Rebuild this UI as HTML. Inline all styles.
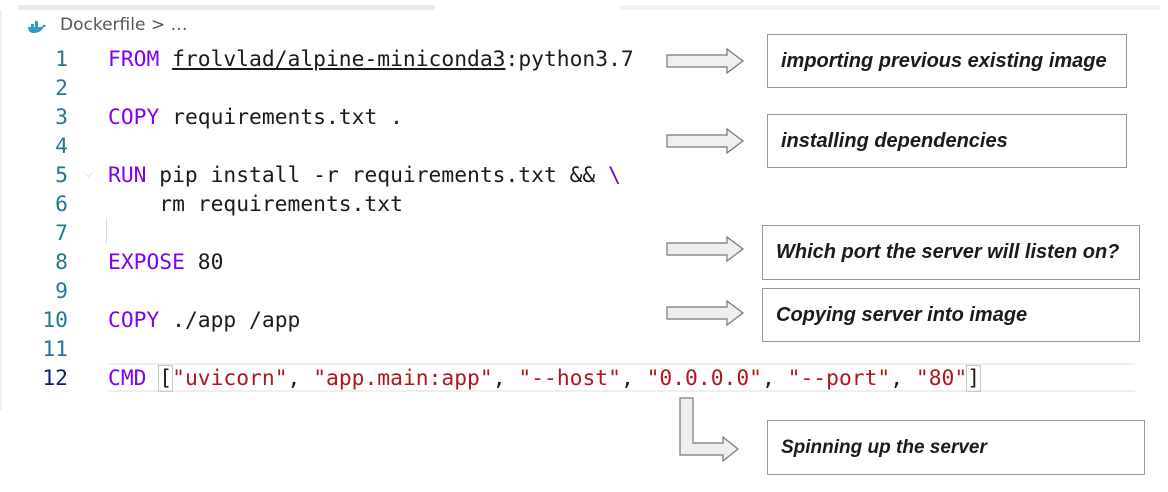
<!DOCTYPE html>
<html><head><meta charset="utf-8"><style>
html,body{margin:0;padding:0;background:#fff;width:1168px;height:492px;overflow:hidden;position:relative}
.a{position:absolute}
.code{font-family:"DejaVu Sans Mono","Liberation Mono",monospace;font-size:21.3px;line-height:29px;white-space:pre;color:#1a1a1a}
.ln{color:#237893;text-align:right;width:40px;left:28px}
.k{color:#8200f0}.s{color:#b3151c}
.box{position:absolute;border:1.5px solid #8a9bab;box-sizing:border-box;font-family:"Liberation Sans",sans-serif;font-style:italic;font-weight:bold;font-size:20px;color:#1a1a1a;display:flex;align-items:center;padding-left:13px;white-space:nowrap}
</style></head><body>
<div class="a" style="left:18px;top:5px;width:417px;height:5px;background:#ebebeb"></div>
<div class="a" style="left:620px;top:5px;width:540px;height:5px;background:#f2f2f2"></div>
<div class="a" style="left:0;top:10px;width:2px;height:400px;background:#f0f0f0"></div>
<svg class="a" style="left:27px;top:21px" width="20" height="14" viewBox="0 0 20 14"><path d="M1 6 H15 C16 3 18 3 19 5 C18 6 17 6 16 7 C14 11 10 12 6 12 C3 12 1 9 1 6Z" fill="#2d9ac8"/><rect x="4" y="3" width="3" height="3" fill="#2d9ac8"/><rect x="8" y="3" width="3" height="3" fill="#2d9ac8"/><rect x="8" y="0" width="3" height="3" fill="#2d9ac8"/></svg>
<div class="a" style="left:60px;top:15px;font-family:'DejaVu Sans','Liberation Sans',sans-serif;font-size:17px;color:#555">Dockerfile &gt; …</div>

<div class="a" style="left:108px;top:363px;width:1027px;height:29px;border-top:2px solid #eee;border-bottom:2px solid #eee;box-sizing:border-box"></div>
<div class="a" style="left:106px;top:218px;width:1px;height:26px;background:#ddd"></div>
<div class="a code ln" style="top:45px">1
2
3
4
5
6
7
8
9
10
11
<span style="color:#0b216f">12</span></div>
<div class="a code" style="left:108px;top:45px"><span class="k">FROM</span> <span style="text-decoration:underline">frolvlad/alpine-miniconda3</span>:python3.7

<span class="k">COPY</span> requirements.txt .

<span class="k">RUN</span> pip install -r requirements.txt &amp;&amp; <span style="color:#6000ff">\</span>
    rm requirements.txt

<span class="k">EXPOSE</span> 80

<span class="k">COPY</span> ./app /app

<span class="k">CMD</span> <span style="outline:1px solid #b9d0b9">[</span><span class="s">"uvicorn"</span>, <span class="s">"app.main:app"</span>, <span class="s">"--host"</span>, <span class="s">"0.0.0.0"</span>, <span class="s">"--port"</span>, <span class="s">"80"</span><span style="outline:1px solid #b9d0b9">]</span></div>
<div class="a" style="left:84px;top:166px;color:#ccc;font-size:12px;font-family:'DejaVu Sans';">⌵</div>

<svg class="a" style="left:0;top:0" width="1168" height="492">
<g fill="#efefef" stroke="#777" stroke-width="1.2">
<path d="M667 55 H727 V49 L743 61 L727 73 V67 H667Z"/>
<path d="M667 135 H727 V129 L743 141 L727 153 V147 H667Z"/>
<path d="M667 243 H727 V237 L743 249 L727 261 V255 H667Z"/>
<path d="M667 307 H727 V301 L743 313 L727 325 V319 H667Z"/>
<path d="M680 398 H693 V443 H723 V437 L738 449 L723 461 V455 H680Z"/>
</g></svg>

<div class="box" style="left:767px;top:34px;width:360px;height:54px">importing previous existing image</div>
<div class="box" style="left:767px;top:114px;width:360px;height:54px">installing dependencies</div>
<div class="box" style="left:762px;top:225px;width:378px;height:55px">Which port the server will listen on?</div>
<div class="box" style="left:762px;top:288px;width:378px;height:54px">Copying server into image</div>
<div class="box" style="left:767px;top:420px;width:378px;height:55px;font-size:19px">Spinning up the server</div>
</body></html>
